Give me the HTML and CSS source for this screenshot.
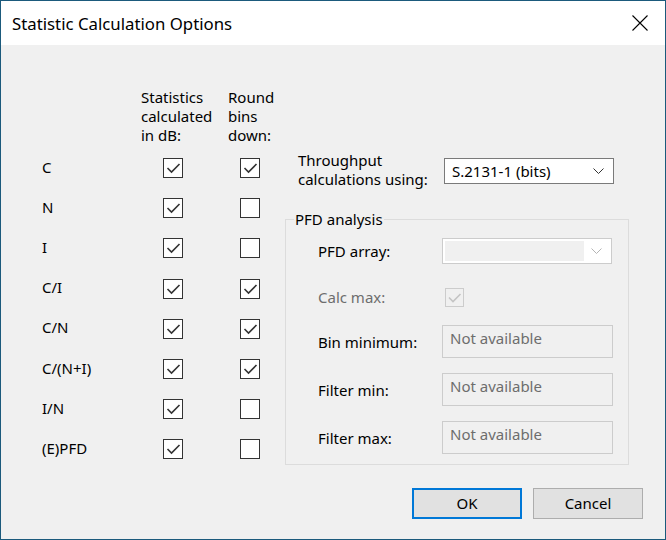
FILE: index.html
```html
<!DOCTYPE html>
<html>
<head>
<meta charset="utf-8">
<link rel="stylesheet" href="styles.css">
</head>
<body>
<div class="window">
  <div class="titlebar">
    <span class="title">Statistic Calculation Options</span>
    <svg class="close" width="16" height="16" viewBox="0 0 16 16"><path d="M0.5 0.5 L15.5 15.5 M15.5 0.5 L0.5 15.5" stroke="#000" stroke-width="1.1" fill="none"/></svg>
  </div>
  <div class="content">
    <div class="main">
      <div class="stats">
        <div class="hdr-row">
          <div class="lbl"></div>
          <div class="hdr hdr1">Statistics<br>calculated<br>in dB:</div>
          <div class="hdr hdr2">Round<br>bins<br>down:</div>
        </div>
        <div class="row"><div class="lbl">C</div><div class="c1"><span class="cb on"></span></div><div class="c2"><span class="cb on"></span></div></div>
        <div class="row"><div class="lbl">N</div><div class="c1"><span class="cb on"></span></div><div class="c2"><span class="cb"></span></div></div>
        <div class="row"><div class="lbl">I</div><div class="c1"><span class="cb on"></span></div><div class="c2"><span class="cb"></span></div></div>
        <div class="row"><div class="lbl">C/I</div><div class="c1"><span class="cb on"></span></div><div class="c2"><span class="cb on"></span></div></div>
        <div class="row"><div class="lbl">C/N</div><div class="c1"><span class="cb on"></span></div><div class="c2"><span class="cb on"></span></div></div>
        <div class="row"><div class="lbl">C/(N+I)</div><div class="c1"><span class="cb on"></span></div><div class="c2"><span class="cb on"></span></div></div>
        <div class="row"><div class="lbl">I/N</div><div class="c1"><span class="cb on"></span></div><div class="c2"><span class="cb"></span></div></div>
        <div class="row"><div class="lbl">(E)PFD</div><div class="c1"><span class="cb on"></span></div><div class="c2"><span class="cb"></span></div></div>
      </div>
      <div class="right">
        <div class="through">
          <div class="through-lbl">Throughput<br>calculations using:</div>
          <div class="combo">
            <span>S.2131-1 (bits)</span>
            <svg class="chev" width="11" height="6" viewBox="0 0 11 6"><path d="M0.5 0.5 L5.5 5.5 L10.5 0.5" stroke="#333" stroke-width="1" fill="none"/></svg>
          </div>
        </div>
        <fieldset class="group">
          <legend>PFD analysis</legend>
          <div class="grow g-array">
            <div class="glbl">PFD array:</div>
            <div class="combo disabled">
              <span class="inner"></span>
              <svg class="chev" width="11" height="6" viewBox="0 0 11 6"><path d="M0.5 0.5 L5.5 5.5 L10.5 0.5" stroke="#b4b4b4" stroke-width="1" fill="none"/></svg>
            </div>
          </div>
          <div class="grow g-calc">
            <div class="glbl grey">Calc max:</div>
            <span class="cb on dis"></span>
          </div>
          <div class="grow g-text">
            <div class="glbl">Bin minimum:</div>
            <div class="tbox">Not available</div>
          </div>
          <div class="grow g-text">
            <div class="glbl">Filter min:</div>
            <div class="tbox">Not available</div>
          </div>
          <div class="grow g-text">
            <div class="glbl">Filter max:</div>
            <div class="tbox">Not available</div>
          </div>
        </fieldset>
      </div>
    </div>
    <div class="buttons">
      <button class="btn default">OK</button>
      <button class="btn">Cancel</button>
    </div>
  </div>
</div>
</body>
</html>
```

FILE: styles.css
```css
* { box-sizing: border-box; }
html, body { margin: 0; padding: 0; }
body {
  font-family: "Noto Sans", "Open Sans", sans-serif;
  font-size: 15px;
  line-height: 19px;
  color: #000;
  background: #f0f0f0;
}
.window {
  width: 666px;
  height: 540px;
  border: 1px solid #1b5a7c;
  background: #f0f0f0;
  display: flex;
  flex-direction: column;
}
.titlebar {
  height: 44px;
  background: #fff;
  display: flex;
  align-items: center;
  justify-content: space-between;
  padding: 0 17px 0 11px;
  flex: none;
}
.title { font-size: 16.8px; }
.close { display: block; }
.content {
  flex: 1;
  display: flex;
  flex-direction: column;
}
.main {
  display: flex;
  align-items: flex-start;
}
.stats {
  width: 284px;
  padding-left: 41px;
  padding-top: 43px;
}
.hdr-row, .row {
  display: flex;
}
.lbl { width: 99px; }
.hdr-row { height: 60px; }
.hdr1 { width: 87px; }
.row { height: 40.2px; align-items: center; }
.row .lbl { position: relative; top: -1px; }
.c1 { width: 87px; padding-left: 22px; display: flex; }
.c2 { padding-left: 12px; display: flex; }
.cb {
  width: 20px;
  height: 20px;
  border: 1px solid #333;
  background: #fff;
  display: block;
  position: relative;
}
.cb.on {
  background: #fff url("data:image/svg+xml;utf8,<svg xmlns='http://www.w3.org/2000/svg' width='18' height='18' viewBox='0 0 18 18'><path d='M3.5 9 L7.5 13 L15.5 5' stroke='%23333333' stroke-width='1.6' fill='none'/></svg>") no-repeat 0 0;
}
.cb.dis { border-color: #cccccc; background-color: #f0f0f0; }
.cb.on.dis {
  background: #f0f0f0 url("data:image/svg+xml;utf8,<svg xmlns='http://www.w3.org/2000/svg' width='17' height='17' viewBox='0 0 17 17'><path d='M3 8.5 L7 12.5 L14.5 5' stroke='%23c4c4c4' stroke-width='1.6' fill='none'/></svg>") no-repeat 0 0;
}
.right {
  width: 344px;
  padding-top: 106px;
}
.through {
  display: flex;
  align-items: flex-start;
  padding-left: 13px;
}
.through-lbl { width: 146px; }
.combo {
  width: 170px;
  height: 26px;
  border: 1px solid #7a7a7a;
  background: #fff;
  display: flex;
  align-items: center;
  justify-content: space-between;
  padding: 0 9px 0 7px;
  font-size: 15px;
}
.through .combo { margin-top: 7px; }
.combo.disabled {
  border-color: #cccccc;
  padding: 2px 9px 2px 2px;
  align-items: stretch;
}
.combo.disabled .inner {
  width: 139px;
  background: #f0f0f0;
}
.combo.disabled .chev { align-self: center; }
.group {
  margin: 21px 0 0 0;
  padding: 0;
  border: 1px solid #dcdcdc;
  height: 255px;
  width: 344px;
}
.group legend {
  padding: 0 1px;
  margin-left: 8px;
}
.grow { display: flex; align-items: center; margin-left: 32px; }
.glbl { width: 124px; }
.grey { color: #6d6d6d; }
.g-array { height: 26px; margin-top: 9px; }
.g-calc { height: 20px; margin-top: 23px; }
.g-calc .cb { margin-left: 3px; width: 19px; height: 19px; }
.g-text { margin-top: 17px; }
.g-calc + .g-text { margin-top: 18px; }
.g-text .glbl { padding-top: 2px; }
.tbox {
  width: 171px;
  height: 33px;
  border: 1px solid #cccccc;
  background: #f0f0f0;
  color: #6d6d6d;
  padding: 3px 0 0 7px;
  line-height: 19px;
}
.g-text + .g-text { margin-top: 15px; }
.buttons {
  display: flex;
  justify-content: flex-end;
  gap: 11px;
  padding: 18px 22px 0 0;
}
.btn {
  width: 110px;
  height: 31px;
  font-family: inherit;
  font-size: 15px;
  background: #e1e1e1;
  border: 1px solid #adadad;
  color: #000;
  padding: 0;
}
.btn.default { border: 2px solid #0078d7; }
```
